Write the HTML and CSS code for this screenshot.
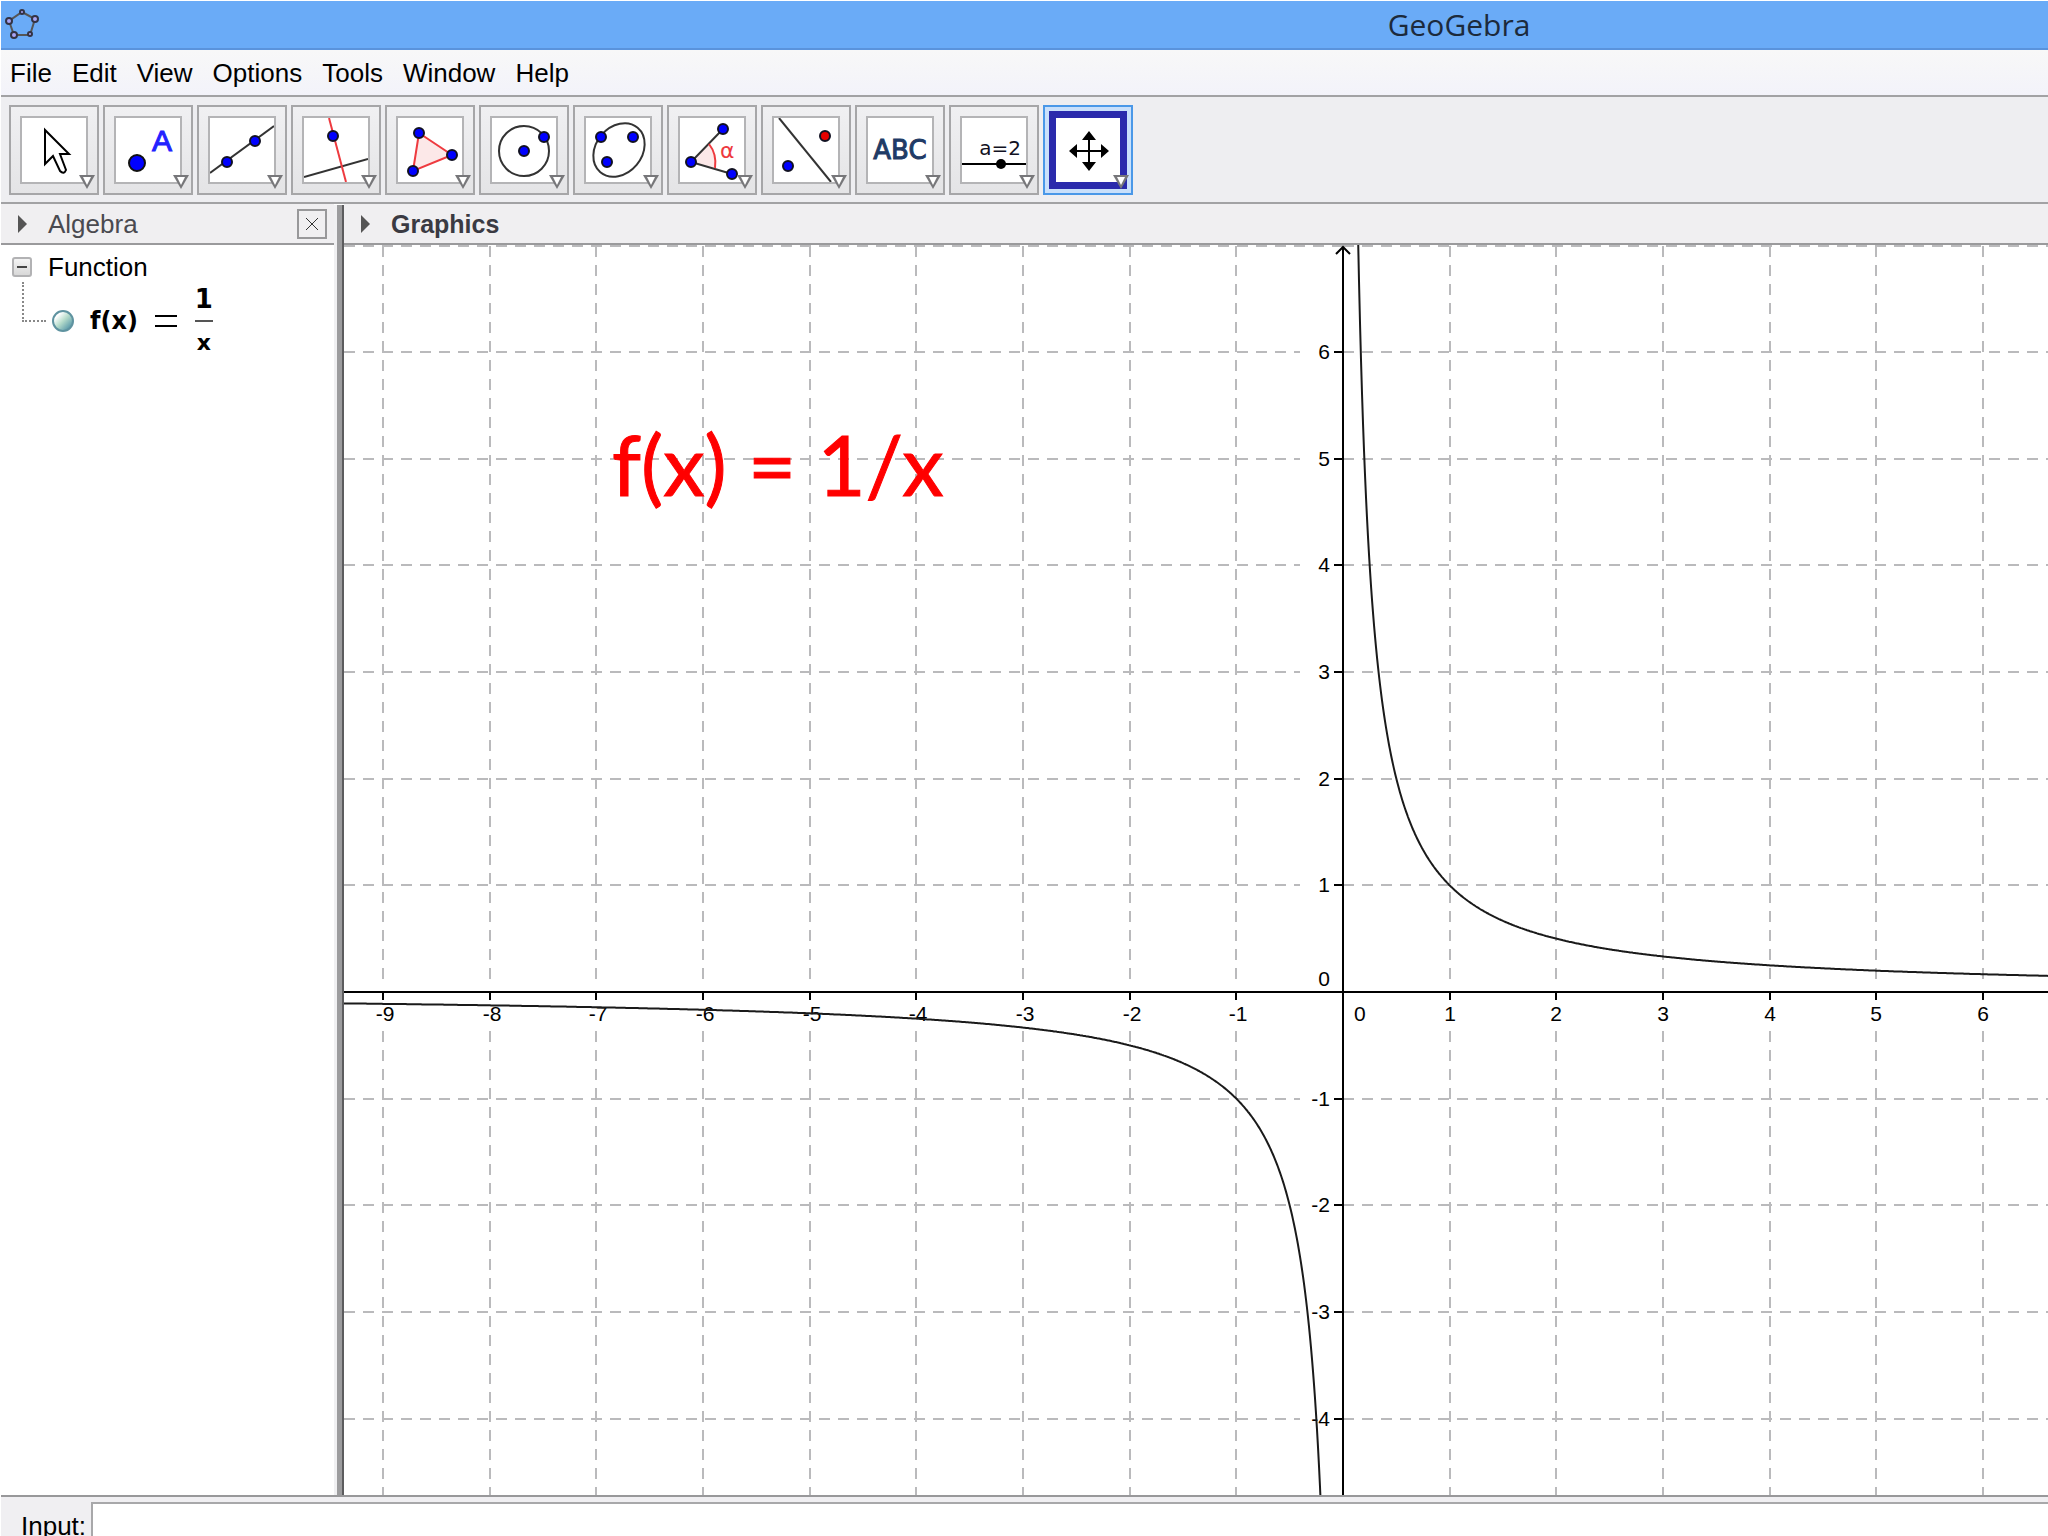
FILE: index.html
```html
<!DOCTYPE html>
<html lang="en">

<head>
    <meta charset="UTF-8">
    <meta name="viewport" content="width=device-width, initial-scale=1.0">
    <title>GeoGebra</title>
    <link rel="stylesheet" href="styles.css">
</head>

<body>
    <!-- Title bar -->
    <header class="titlebar">
        <svg class="logo" width="36" height="36" viewBox="0 0 36 36">
            <path d="M18 5L31 12L26 28H10L5 14Z" fill="none" stroke="#555" stroke-width="2" />
            <g fill="#a9a4f5" stroke="#334" stroke-width="2">
                <circle cx="18" cy="5" r="2" />
                <circle cx="31" cy="12" r="3" />
                <circle cx="26" cy="27" r="2" />
                <circle cx="10" cy="28" r="3" />
                <circle cx="5" cy="14" r="3" />
            </g>
        </svg>
        <h1>GeoGebra</h1>
    </header>

    <!-- Menu -->
    <nav class="menubar">
        <button type="button">File</button>
        <button type="button">Edit</button>
        <button type="button">View</button>
        <button type="button">Options</button>
        <button type="button">Tools</button>
        <button type="button">Window</button>
        <button type="button">Help</button>
    </nav>

    <!-- Toolbar -->
    <div class="toolbar" role="toolbar" aria-label="Tools">
        <button type="button" class="tool" aria-label="Move">
            <svg class="pic" viewBox="0 0 64 64">
                <path d="M23 12V46L31 38L38 53Q42 57 44 52L38 36H47Z" fill="#fff" stroke="#000" stroke-width="2" />
            </svg>
        </button>
        <button type="button" class="tool" aria-label="Point">
            <svg class="pic" viewBox="0 0 64 64">
                <circle cx="21" cy="45" r="8" fill="#00f" stroke="#111" stroke-width="2" />
                <text x="36" y="33" class="letter-a">A</text>
            </svg>
        </button>
        <button type="button" class="tool" aria-label="Line">
            <svg class="pic" viewBox="0 0 64 64">
                <path d="M0 55L64 8" class="ink" />
                <circle cx="17" cy="44" r="5" class="dot" />
                <circle cx="45" cy="23" r="5" class="dot" />
            </svg>
        </button>
        <button type="button" class="tool" aria-label="Perpendicular Line">
            <svg class="pic" viewBox="0 0 64 64">
                <path d="M0 59L64 41" class="ink" />
                <path d="M25 0L42 64" class="red" />
                <circle cx="29" cy="18" r="5" class="dot" />
            </svg>
        </button>
        <button type="button" class="tool" aria-label="Polygon">
            <svg class="pic" viewBox="0 0 64 64">
                <path d="M21 15L54 37L15 53Z" class="red tint" />
                <circle cx="21" cy="15" r="5" class="dot" />
                <circle cx="54" cy="37" r="5" class="dot" />
                <circle cx="15" cy="53" r="5" class="dot" />
            </svg>
        </button>
        <button type="button" class="tool" aria-label="Circle with Center through Point">
            <svg class="pic" viewBox="0 0 64 64">
                <circle cx="32" cy="33" r="25" class="ink" />
                <circle cx="32" cy="33" r="5" class="dot" />
                <circle cx="52" cy="19" r="5" class="dot" />
            </svg>
        </button>
        <button type="button" class="tool" aria-label="Ellipse">
            <svg class="pic" viewBox="0 0 64 64">
                <ellipse cx="33" cy="32" rx="29" ry="23" transform="rotate(-50 33 32)" class="ink" />
                <circle cx="15" cy="19" r="5" class="dot" />
                <circle cx="47" cy="19" r="5" class="dot" />
                <circle cx="21" cy="44" r="5" class="dot" />
            </svg>
        </button>
        <button type="button" class="tool" aria-label="Angle">
            <svg class="pic" viewBox="0 0 64 64">
                <path d="M11 44L29 26Q37 36 35 50Z" class="tint" />
                <path d="M43 11L11 44L52 56" class="ink" />
                <path d="M29 26Q37 36 35 50" class="red" />
                <text x="40" y="40" class="alpha">α</text>
                <circle cx="43" cy="11" r="5" class="dot" />
                <circle cx="11" cy="44" r="5" class="dot" />
                <circle cx="52" cy="56" r="5" class="dot" />
            </svg>
        </button>
        <button type="button" class="tool" aria-label="Reflect about Line">
            <svg class="pic" viewBox="0 0 64 64">
                <path d="M5 0L57 64" class="ink" />
                <circle cx="14" cy="48" r="5" class="dot" />
                <circle cx="51" cy="18" r="5" class="dot dot-red" />
            </svg>
        </button>
        <button type="button" class="tool" aria-label="Text">
            <svg class="pic" viewBox="0 0 64 64">
                <text x="32" y="41" class="abc">ABC</text>
            </svg>
        </button>
        <button type="button" class="tool" aria-label="Slider">
            <svg class="pic" viewBox="0 0 64 64">
                <text x="38" y="37" class="slider-text">a=2</text>
                <path d="M0 46H64" stroke="#000" stroke-width="2" />
                <circle cx="39" cy="46" r="5" />
            </svg>
        </button>
        <button type="button" class="tool selected" aria-label="Move Graphics View">
            <svg class="pic" viewBox="0 0 64 64">
                <path d="M33 18V48M18 33H48" stroke="#000" stroke-width="2" />
                <path d="M33 13L40 22H26ZM33 53L40 44H26ZM13 33L21 26V40ZM53 33L45 26V40Z" />
            </svg>
        </button>
    </div>

    <main class="workspace">
        <!-- Algebra view -->
        <section class="algebra">
            <div class="panel-head">
                <svg class="fold" viewBox="0 0 9 18"><path d="M0 0L9 9L0 18Z" /></svg>
                <h2>Algebra</h2>
                <button type="button" class="close" aria-label="Close">
                    <svg width="14" height="14" viewBox="0 0 14 14"><path d="M1 1L13 13M13 1L1 13" stroke="#333" /></svg>
                </button>
            </div>
            <div class="tree">
                <div class="group">
                    <button type="button" class="toggle" aria-label="Collapse"></button>
                    <span>Function</span>
                </div>
                <div class="item">
                    <span class="branch"></span>
                    <span class="marble"></span>
                    <span class="formula">f(x)</span>
                    <svg class="equals" viewBox="0 0 22 12"><path d="M0 1H22M0 11H22" stroke="#000" stroke-width="2" /></svg>
                    <span class="fraction"><span class="num">1</span><span class="den">x</span></span>
                </div>
            </div>
        </section>

        <div class="splitter"></div>

        <!-- Graphics view -->
        <section class="graphics">
            <div class="panel-head">
                <svg class="fold" viewBox="0 0 9 18"><path d="M0 0L9 9L0 18Z" /></svg>
                <h2>Graphics</h2>
            </div>
            <div class="canvas">
                <svg id="plot" class="plot"></svg>
            </div>
        </section>
    </main>

    <!-- Input bar -->
    <footer class="inputbar">
        <label for="command">Input:</label>
        <input id="command" type="text" autocomplete="off">
    </footer>

    <script src="script.js"></script>
</body>

</html>
```
FILE: styles.css
```css
* {
    box-sizing: border-box;
}

body {
    margin: 0;
    padding: 1px 0 0 1px;
    height: 100vh;
    display: flex;
    flex-direction: column;
    overflow: hidden;
    background: #fff;
    color: #000;
    font-family: "Liberation Sans", Arial, sans-serif;
    font-size: 26px;
    line-height: 30px;
}

button {
    margin: 0;
    padding: 0;
    border: 0;
    background: none;
    color: inherit;
    font: inherit;
}

h1,
h2 {
    margin: 0;
    font-size: 26px;
    font-weight: normal;
}

/* Title bar */
.titlebar {
    flex: none;
    display: flex;
    align-items: center;
    height: 49px;
    padding: 0 4px 0 3px;
    background: #6aabf7;
    border-bottom: 2px solid #5a93dc;
}

.titlebar h1 {
    flex: 1;
    padding-left: 834px;
    text-align: center;
    font-family: "Open Sans", "Noto Sans", sans-serif;
    font-size: 30px;
    line-height: 40px;
    color: #1c2a3c;
}

/* Menu */
.menubar {
    flex: none;
    display: flex;
    align-items: center;
    gap: 20px;
    height: 47px;
    padding: 0 9px;
    background: linear-gradient(#f8f8f8, #f3f3fa);
    border-bottom: 2px solid #a2a2a4;
}

/* Toolbar */
.toolbar {
    flex: none;
    display: flex;
    gap: 4px;
    padding: 8px 8px 7px;
    background: #eeeef1;
    border-bottom: 2px solid #a2a2a4;
}

.tool {
    position: relative;
    width: 90px;
    height: 90px;
    display: flex;
    align-items: center;
    justify-content: center;
    border: 2px solid #a6a6a8;
    background: linear-gradient(#f0f0f2, #e4e4e6);
}

.pic {
    width: 68px;
    height: 68px;
    border: 2px solid #b4b4b6;
    background: #fff;
}

/* drop-down arrow in the corner of each tool */
.tool::before,
.tool::after {
    content: "";
    position: absolute;
    right: 2px;
    bottom: 4px;
    width: 16px;
    height: 14px;
    background: #77777a;
    clip-path: polygon(0 0, 100% 0, 50% 100%);
}

.tool::after {
    right: 6px;
    bottom: 8px;
    width: 8px;
    height: 8px;
    background: #fff;
}

.selected {
    border-color: #4a98e8;
    background: #c9e0fb;
}

.selected .pic {
    width: 78px;
    height: 78px;
    border: 7px solid #2a2aac;
}

.ink {
    fill: none;
    stroke: #333;
    stroke-width: 2;
}

.red {
    fill: none;
    stroke: #ee3a3f;
    stroke-width: 2;
}

.tint {
    fill: #fce8e8;
}

.dot {
    fill: #00f;
    stroke: #112;
    stroke-width: 2;
}

.dot-red {
    fill: #e60000;
}

.letter-a {
    font-size: 30px;
    fill: #22f;
    stroke: #22f;
}

.alpha {
    font-family: "DejaVu Sans", sans-serif;
    font-size: 22px;
    fill: #ee3a3f;
}

.abc {
    font-family: "DejaVu Sans", sans-serif;
    font-size: 26px;
    text-anchor: middle;
    fill: #1f3b66;
    stroke: #1f3b66;
}

.slider-text {
    font-family: "DejaVu Sans", sans-serif;
    font-size: 20px;
    text-anchor: middle;
    fill: #112;
}

/* Panels */
.workspace {
    flex: 1;
    min-height: 0;
    display: flex;
}

.algebra {
    width: 333px;
    display: flex;
    flex-direction: column;
}

.graphics {
    flex: 1;
    min-width: 0;
    display: flex;
    flex-direction: column;
}

.splitter {
    width: 10px;
    margin-top: 1px;
    border-left: 3px solid #f0f0f2;
    background: #9c9c9e;
    box-shadow: inset -2px 0 #5c5c5e;
}

.panel-head {
    flex: none;
    display: flex;
    align-items: center;
    height: 41px;
    padding: 0 7px 0 17px;
    background: #f0eff1;
    border-bottom: 2px solid #9a9a9c;
    color: #4a4a50;
}

.fold {
    width: 9px;
    height: 18px;
    margin-right: 21px;
    fill: #555;
}

.graphics h2 {
    font-size: 25px;
    font-weight: bold;
    color: #3a3a42;
}

.close {
    width: 30px;
    height: 30px;
    margin-left: auto;
    display: flex;
    align-items: center;
    justify-content: center;
    border: 2px solid #98989a;
}

/* Algebra tree */
.tree {
    padding: 7px 0 0 11px;
}

.group {
    display: flex;
    align-items: center;
    gap: 16px;
}

.toggle {
    width: 20px;
    height: 20px;
    display: flex;
    align-items: center;
    justify-content: center;
    border: 2px solid #b2b2b4;
    border-radius: 3px;
    background: linear-gradient(#f4f4f4, #d8d8d8);
}

.toggle::before {
    content: "";
    width: 10px;
    height: 2px;
    background: #444;
}

.item {
    display: flex;
    align-items: center;
    height: 78px;
    padding-left: 10px;
    font-family: "DejaVu Sans", sans-serif;
    font-size: 24px;
    font-weight: bold;
}

.branch {
    width: 24px;
    height: 40px;
    margin-bottom: 38px;
    border: dotted #888;
    border-width: 0 0 2px 2px;
}

.marble {
    width: 22px;
    height: 22px;
    margin: 0 16px 0 6px;
    border: 2px solid #5f93a0;
    border-radius: 50%;
    background: linear-gradient(135deg, #fff 20%, #b6dccb 50%, #3f86a0);
}

.equals {
    width: 22px;
    height: 12px;
    margin: 0 18px 0 17px;
}

.fraction {
    display: flex;
    flex-direction: column;
    text-align: center;
}

.num {
    padding-bottom: 6px;
    border-bottom: 2px solid #555;
    font-size: 26px;
}

.den {
    padding-top: 6px;
    font-size: 22px;
}

/* Plot */
.canvas {
    flex: 1;
    min-height: 0;
}

.plot {
    display: block;
    width: 100%;
    height: 100%;
    overflow: hidden;
}

.grid {
    stroke: #bababc;
    stroke-width: 2;
    stroke-dasharray: 11 8;
}

.axis {
    stroke: #000;
    stroke-width: 2;
    fill: none;
}

.curve {
    stroke: #1a1a1a;
    stroke-width: 2;
    fill: none;
}

.tick-label {
    font-size: 21px;
}

.middle {
    text-anchor: middle;
}

.end {
    text-anchor: end;
}

.caption {
    font-family: Lato, sans-serif;
    font-size: 83px;
    fill: #f00;
    stroke: #f00;
}

/* Input bar */
.inputbar {
    flex: none;
    display: flex;
    height: 41px;
    padding: 5px 0 0 20px;
    overflow: hidden;
    background: #f0eff2;
    border-top: 2px solid #98989a;
}

.inputbar label {
    padding: 9px 5px 0 0;
}

.inputbar input {
    flex: 1;
    height: 54px;
    padding: 8px;
    border: 2px solid #a8a8aa;
    border-right: 0;
    border-radius: 0;
    background: #fff;
    font: inherit;
    outline: none;
}
```
FILE: script.js
```js
const plot = document.getElementById('plot');
const unit = 320 / 3;
const origin = { x: 999, y: 747 };

function add(tag, attrs, text) {
    const el = document.createElementNS('http://www.w3.org/2000/svg', tag);
    for (const key in attrs) el.setAttribute(key, attrs[key]);
    if (text !== undefined) el.textContent = text;
    plot.appendChild(el);
}

function line(cls, x1, y1, x2, y2) {
    add('path', { class: cls, d: `M${x1} ${y1}L${x2} ${y2}` });
}

function branch(from, to) {
    const points = [];
    for (let px = from; px <= to; px += 1) {
        const x = (px - origin.x) / unit;
        points.push(`${px} ${(origin.y - unit / x).toFixed(1)}`);
    }
    add('path', { class: 'curve', d: 'M' + points.join('L') });
}

function draw() {
    const w = plot.clientWidth;
    const h = plot.clientHeight;
    const left = Math.ceil(-origin.x / unit);
    const right = Math.floor((w - origin.x) / unit);
    const top = Math.floor(origin.y / unit);
    const bottom = Math.ceil((origin.y - h) / unit);
    plot.replaceChildren();

    // grid, left open where the axis labels stand
    for (let i = left; i <= right; i++) {
        if (i === 0) continue;
        const x = Math.round(origin.x + i * unit);
        line('grid', x, 1, x, origin.y - 6);
        line('grid', x, origin.y + 39, x, h);
    }
    for (let i = bottom; i <= top; i++) {
        if (i === 0) continue;
        const y = Math.max(1, Math.round(origin.y - i * unit));
        line('grid', 0, y, i === top ? origin.x : origin.x - 43, y);
        line('grid', origin.x, y, w, y);
    }

    // axes
    line('axis', 0, origin.y, w, origin.y);
    line('axis', origin.x, h, origin.x, 2);
    add('path', { class: 'axis', d: `M${origin.x - 7} 9L${origin.x} 2L${origin.x + 7} 9` });

    for (let i = left; i <= right; i++) {
        if (i === 0) continue;
        const x = Math.round(origin.x + i * unit);
        line('axis', x, origin.y, x, origin.y + 8);
        add('text', { class: 'tick-label middle', x: i < 0 ? x + 2 : x, y: origin.y + 29 }, i);
    }
    for (let i = bottom; i < top; i++) {
        if (i === 0) continue;
        const y = Math.round(origin.y - i * unit);
        line('axis', origin.x - 9, y, origin.x, y);
        add('text', { class: 'tick-label end', x: origin.x - 13, y: y + 7 }, i);
    }
    add('text', { class: 'tick-label end', x: origin.x - 13, y: origin.y - 6 }, 0);
    add('text', { class: 'tick-label', x: origin.x + 11, y: origin.y + 29 }, 0);

    branch(0, origin.x - 10);
    branch(origin.x + 10, w);

    add('text', { class: 'caption', x: 268, y: 251 }, 'f(x) = 1/x');
}

draw();
window.addEventListener('resize', draw);
```
